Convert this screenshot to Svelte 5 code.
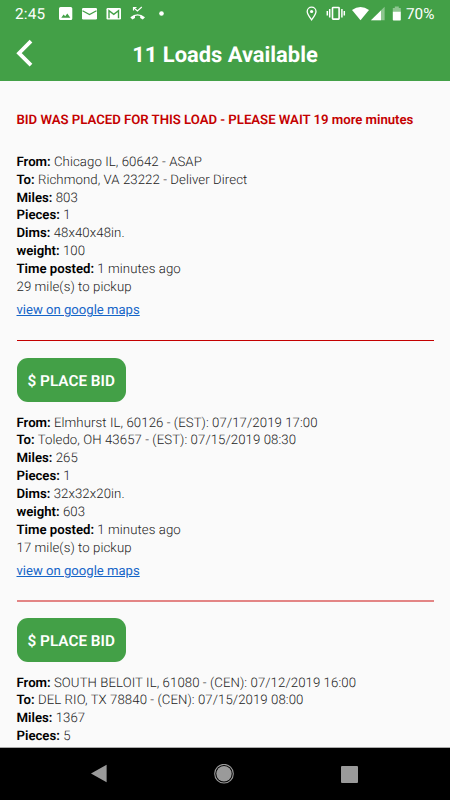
<script>
	const loads = [
		{
			notice: 'BID WAS PLACED FOR THIS LOAD - PLEASE WAIT 19 more minutes',
			from: 'Chicago IL, 60642 - ASAP',
			to: 'Richmond, VA 23222 - Deliver Direct',
			miles: 803,
			pieces: 1,
			dims: '48x40x48in.',
			weight: 100,
			posted: '1 minutes ago',
			pickup: 29
		},
		{
			from: 'Elmhurst IL, 60126 - (EST): 07/17/2019 17:00',
			to: 'Toledo, OH 43657 - (EST): 07/15/2019 08:30',
			miles: 265,
			pieces: 1,
			dims: '32x32x20in.',
			weight: 603,
			posted: '1 minutes ago',
			pickup: 17
		},
		{
			from: 'SOUTH BELOIT IL, 61080 - (CEN): 07/12/2019 16:00',
			to: 'DEL RIO, TX 78840 - (CEN): 07/15/2019 08:00',
			miles: 1367,
			pieces: 5
		}
	];
</script>

<div class="screen">
	<header>
		<div class="status-bar">
			<span class="clock">2:45</span>
			<svg class="notifications" width="106" height="16" viewBox="0 0 106 16">
				<path fill="#fff" fill-rule="evenodd" d="M1.5 1h10.300a1.500 1.500 0 0 1 1.500 1.500v10a1.500 1.500 0 0 1-1.500 1.500H1.500A1.500 1.500 0 0 1 0 12.500v-10A1.500 1.500 0 0 1 1.500 1zM2.300 11.800h9L8.300 7.600 6.200 10.200 4.600 8.500z" />
				<rect x="23" y="2" width="15" height="11.500" rx="1.200" fill="#fff" />
				<path d="M23.500 4.800l7 3.800 7-3.800" fill="none" stroke="#43a047" stroke-width="1.200" />
				<rect x="47.500" y="2" width="14.500" height="11.500" rx="1.200" fill="#fff" />
				<path d="M50 12.300V4.600l4.750 3.800 4.750-3.800v7.700" fill="none" stroke="#43a047" stroke-width="1.400" />
				<path d="M74.500 4.500V1.500h3M74.800 1.700l3.600 3.300 4.400-4" fill="none" stroke="#fff" stroke-width="1.200" />
				<path d="M71.300 11.300Q78.500 5.300 86 11.300L83.800 13.600 81.200 12V9.900Q78.500 9.100 76 9.900V12L73.400 13.600z" fill="#fff" />
				<circle cx="102.500" cy="7.500" r="2.300" fill="#fff" />
			</svg>
			<svg class="system" width="96" height="16" viewBox="0 0 96 16">
				<path d="M5.600 13.800C3.300 10.700 1.200 8.200 1.200 5.500a4.400 4.400 0 0 1 8.800 0c0 2.700-2.100 5.200-4.400 8.300z" fill="none" stroke="#fff" stroke-width="1.300" />
				<circle cx="5.600" cy="5.500" r="1.600" fill="#fff" />
				<rect x="26.500" y="1.500" width="6.600" height="11.600" rx=".6" fill="none" stroke="#fff" stroke-width="1.600" />
				<path d="M23.700 3v8.600M21.300 5v4.600M35.900 3v8.600M38.300 5v4.600" stroke="#fff" stroke-width="1.500" />
				<path d="M46 4Q54.500-2.200 63 4L54.500 14.200z" fill="#fff" />
				<path d="M78.600 .8v13.400H65z" fill="#fff" opacity=".4" />
				<path d="M75 4.400v9.800H65z" fill="#fff" />
				<path d="M88.800 .6h4v1.300h2v4h-8v-4h2z" fill="#fff" opacity=".4" />
				<path d="M86.800 5.800h8v8a.8.8 0 0 1-.8.8h-6.400a.8.8 0 0 1-.8-.8z" fill="#fff" />
			</svg>
			<span class="charge">70%</span>
		</div>
		<div class="title-bar">
			<svg width="18" height="30" viewBox="0 0 18 30">
				<path d="M15 2.200L3 14.200l12 12" fill="none" stroke="#fff" stroke-width="3.800" />
			</svg>
			<h1>11 Loads Available</h1>
		</div>
	</header>

	<main>
		{#each loads as load}
			<section class="load">
				{#if load.notice}
					<p class="notice">{load.notice}</p>
				{:else}
					<button>$ PLACE BID</button>
				{/if}
				<p><b>From:</b> {load.from}</p>
				<p><b>To:</b> {load.to}</p>
				<p><b>Miles:</b> {load.miles}</p>
				<p><b>Pieces:</b> {load.pieces}</p>
				{#if load.dims}
					<p><b>Dims:</b> {load.dims}</p>
					<p><b>weight:</b> {load.weight}</p>
					<p><b>Time posted:</b> {load.posted}</p>
					<p>{load.pickup} mile(s) to pickup</p>
					<a href="#maps">view on google maps</a>
				{/if}
			</section>
		{/each}
	</main>

	<nav>
		<svg width="16" height="20" viewBox="0 0 16 20"><path d="M15.600 .8v17.400L0 9.500z" fill="#9a9a9a" /></svg>
		<svg width="20" height="20" viewBox="0 0 20 20">
			<circle cx="10" cy="9.700" r="9.300" fill="none" stroke="#9a9a9a" stroke-width="1.100" />
			<circle cx="10" cy="9.700" r="7.700" fill="#9a9a9a" />
		</svg>
		<svg width="17" height="17" viewBox="0 0 17 17"><rect width="17" height="17" rx="1" fill="#9a9a9a" /></svg>
	</nav>
</div>

<style>
	:global(body) {
		margin: 0;
		background: #fafafa;
	}

	.screen {
		display: flex;
		flex-direction: column;
		height: 800px;
		overflow: hidden;
		background: #fafafa;
		font-family: Roboto, sans-serif;
		text-rendering: geometricPrecision;
	}

	header {
		flex: none;
		box-sizing: border-box;
		height: 81px;
		background: #43a047;
		color: #fff;
	}

	.status-bar {
		display: flex;
		align-items: center;
		height: 27px;
		padding: 0 15px;
		font-size: 15.3px;
	}
	.clock { width: 44px; letter-spacing: 0.2px; }
	.system { margin-left: auto; }
	.charge { width: 29px; margin-left: 4px; }

	.title-bar {
		display: flex;
		align-items: center;
		height: 54px;
		padding: 0 17px 0 16px;
	}
	h1 {
		flex: 1;
		margin: 0 17px 0 0;
		padding-top: 2px;
		text-align: center;
		font-size: 21.9px;
		font-weight: 700;
	}

	main {
		flex: 1;
		min-height: 0;
		overflow: hidden;
		padding: 0 16.5px;
	}

	.load {
		height: 242px;
		padding-top: 17px;
		border-bottom: 2px solid #e38585;
	}
	.load:first-child {
		height: 240.5px;
		padding-top: 18.5px;
		border-bottom: 1px solid #c40000;
	}
	.load:last-child { padding-top: 16px; }

	p {
		margin: 0;
		font-size: 13.2px;
		font-weight: 300;
		line-height: 17.86px;
		letter-spacing: 0.08px;
		color: #222;
		white-space: nowrap;
	}
	b { font-weight: 600; letter-spacing: 0; color: #000; }

	.notice {
		margin: 12.5px 0 24px;
		font-weight: 600;
		letter-spacing: -0.02px;
		color: #c40000;
	}

	button {
		display: block;
		box-sizing: border-box;
		width: 109.5px;
		height: 43.5px;
		margin-bottom: 13px;
		padding: 2px 0 0;
		border: 0;
		border-radius: 11px;
		background: #43a047;
		color: #fff;
		font: 600 15.3px Roboto, sans-serif;
		text-rendering: inherit;
	}

	a {
		display: inline-block;
		margin-top: 5.5px;
		font-size: 13.1px;
		line-height: 18px;
		color: #1565c8;
	}

	nav {
		flex: none;
		display: flex;
		align-items: center;
		justify-content: space-between;
		box-sizing: border-box;
		height: 53px;
		padding: 0 92px 0 91px;
		border-top: 1px solid #aaa;
		background: #000;
	}
</style>
